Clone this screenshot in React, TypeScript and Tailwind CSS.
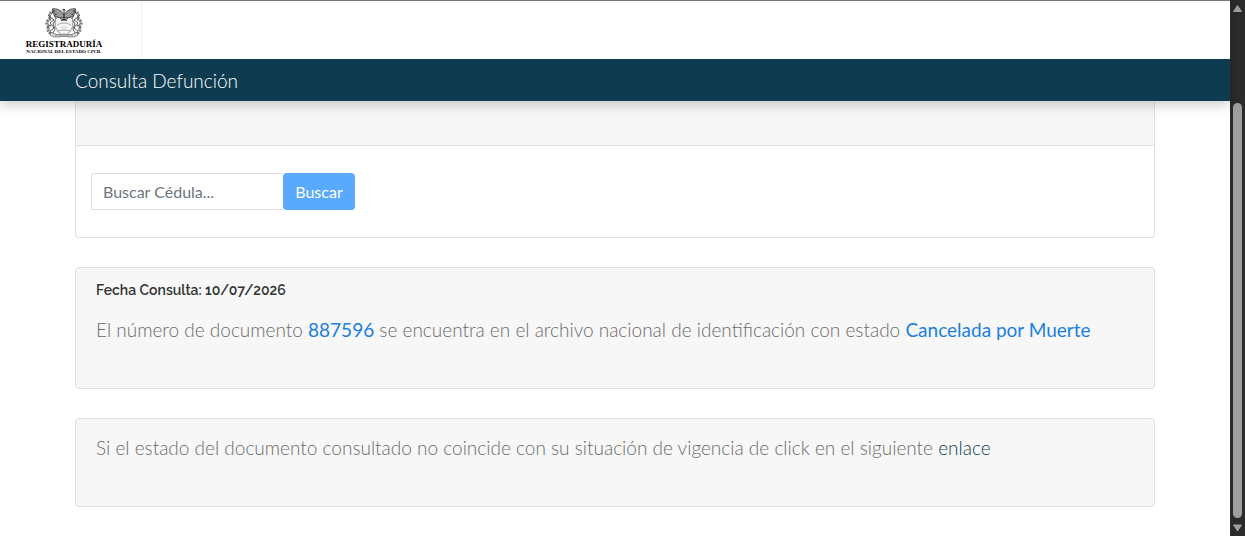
import { useState } from "react";

export default function App() {
  return (
    <div className="flex min-h-screen bg-white font-['Lato',sans-serif] text-[#6b6b6b]">
      <div className="min-w-0 flex-1">
        <Header />
        <main className="flex flex-col gap-[29px] px-[75px]">
          <SearchCard />
          <ResultCard date="10/07/2026" documentNumber="887596" status="Cancelada por Muerte" />
          <NoticeCard />
        </main>
      </div>
      <Scrollbar />
    </div>
  );
}

function Header() {
  return (
    <header className="relative z-10 border-t border-[#717a7c] shadow-[0_4px_12px_rgba(0,0,0,0.2)]">
      <div className="flex h-[58px] bg-white">
        <a
          aria-label="Registraduría Nacional del Estado Civil"
          className="flex w-[142px] flex-col items-start border-r border-[#f1f1f1] pt-[6px] pl-[26px] text-black"
          href="#"
        >
          <span className="flex w-[76px] flex-col items-center">
            <Crest />
            <span className="font-['Liberation_Serif',serif] text-[9px] leading-[9px] font-black whitespace-nowrap">
              REGISTRADURÍA
            </span>
            <span className="font-['Liberation_Serif',serif] text-[5px] leading-[5px] font-black whitespace-nowrap">
              NACIONAL DEL ESTADO CIVIL
            </span>
          </span>
        </a>
      </div>
      <div className="flex h-[42px] items-center bg-[#0f3b51] px-[75px]">
        <h1 className="pt-[2px] text-[19px] leading-6 font-light text-white">Consulta Defunción</h1>
      </div>
    </header>
  );
}

function SearchCard() {
  const [cedula, setCedula] = useState("");

  return (
    <section className="rounded-b border border-t-0 border-[#dfdfdf] bg-white">
      <div className="h-[45px] border-b border-[#dfdfdf] bg-[#f7f7f7]" />
      <form className="flex px-[15px] py-[27px]" onSubmit={(event) => event.preventDefault()}>
        <input
          aria-label="Buscar Cédula"
          className="h-[37px] w-[192px] rounded-l-[3px] border border-r-0 border-[#dcdfe2] bg-white px-[11px] text-base text-[#495057] outline-none placeholder:text-[#6c757d]"
          onChange={(event) => setCedula(event.target.value)}
          placeholder="Buscar Cédula..."
          type="text"
          value={cedula}
        />
        <button className="h-[37px] w-[72px] rounded bg-[#59a9ff] text-base text-white" type="submit">
          Buscar
        </button>
      </form>
    </section>
  );
}

type ResultCardProps = {
  date: string;
  documentNumber: string;
  status: string;
};

function ResultCard({ date, documentNumber, status }: ResultCardProps) {
  return (
    <section className="rounded border border-[#dfdfdf] bg-[#f7f7f7] px-5 pt-[14px] pb-[44px]">
      <h2 className="font-['Raleway','Open_Sans',sans-serif] text-[14px] leading-4 font-semibold text-[#333]">
        Fecha Consulta: {date}
      </h2>
      <p className="mt-[18px] text-[19px] leading-7 font-light">
        El número de documento <span className="font-normal text-[#1a7fe0]">{documentNumber}</span> se encuentra en
        el archivo nacional de identificación con estado{" "}
        <span className="font-normal text-[#1a7fe0]">{status}</span>
      </p>
    </section>
  );
}

function NoticeCard() {
  return (
    <section className="rounded border border-[#dfdfdf] bg-[#f7f7f7] px-5 pt-[15px] pb-[44px]">
      <p className="text-[19px] leading-7 font-light">
        Si el estado del documento consultado no coincide con su situación de vigencia de click en el siguiente{" "}
        <a className="text-[#0f3b51]" href="#">
          enlace
        </a>
      </p>
    </section>
  );
}

function Scrollbar() {
  return (
    <div aria-hidden="true" className="flex w-[15px] flex-col items-center bg-[#2b2b2b] py-[4px]">
      <svg className="h-[8px] w-[9px]" viewBox="0 0 9 8">
        <path d="M4.5 1.500 8.500 7.500H0.5Z" fill="#9f9f9f" stroke="#9f9f9f" strokeLinejoin="round" />
      </svg>
      <div className="mt-[91px] mb-[6px] w-[9px] flex-1 rounded-full bg-[#9f9f9f]" />
      <svg className="h-[8px] w-[9px]" viewBox="0 0 9 8">
        <path d="M4.5 7 8.500 1H0.5Z" fill="#9f9f9f" stroke="#9f9f9f" strokeLinejoin="round" />
      </svg>
    </div>
  );
}

function Crest() {
  return (
    <svg aria-hidden="true" className="h-[33px] w-[38px]" fill="none" stroke="#222" viewBox="0 0 38 33">
      {/* flags and foliage */}
      <path d="M9 4C4 6 3 10 6 12 1 13 1 18 4 19 2 22 3 25 7 27" strokeWidth="3" stroke="#777" strokeDasharray="2 0.7" />
      <path d="M29 4c5 2 6 6 3 8 5 1 5 6 2 7 2 3 1 6-3 8" strokeWidth="3" stroke="#777" strokeDasharray="2 0.7" />
      <path d="M8 6l3 6-3 5 2 5-2 4M30 6l-3 6 3 5-2 5 2 4M4 9l5 4-4 3 4 5-4 3M34 9l-5 4 4 3-4 5 4 3" stroke="#444" strokeWidth="0.9" />
      {/* shield */}
      <path d="M11 11c5-2 11-2 16 0 2 6 1 14-8 18-9-4-10-12-8-18Z" fill="#f6f6f6" stroke="#777" strokeWidth="0.8" />
      <path d="M12 18q7-4 14 0M12 24q7-2 14 0" stroke="#999" strokeWidth="0.8" />
      <path d="M16 20h6M17 22h4" stroke="#bbb" strokeWidth="0.7" />
      {/* condor */}
      <path
        d="M19 8C16 3 12 1 7 2c1 1 2 2 3 2-1 .5-2 .5-3 1 2 1.500 3 2 4.500 2-1 .5-2 1-2.500 1.500C13 11 16 11 19 10.500c3 .5 6 .5 10-2-.5-.5-1.500-1-2.500-1.500C28 7 29 6.500 31 5c-1-.5-2-.5-3-1 1 0 2-1 3-2-5-1-9 1-12 6Z"
        fill="#999"
        strokeWidth="0.7"
      />
      <path d="M17 3.500c.5-1.500 3-1.500 3.500 0M19 3v11M15 11c2 2 6 2 8 0M16 14l3-2 3 2" strokeWidth="1" />
      {/* ribbon */}
      <path d="M6 25c4 3 8 3 13 2 5 1 9 1 13-2l1 3c-4 3-9 2-14 1-5 1-10 2-14-1Z" fill="#ddd" stroke="#555" strokeWidth="0.7" />
      <path d="M10 28q9 2 18 0" stroke="#777" strokeDasharray="1 0.7" strokeWidth="1" />
    </svg>
  );
}
